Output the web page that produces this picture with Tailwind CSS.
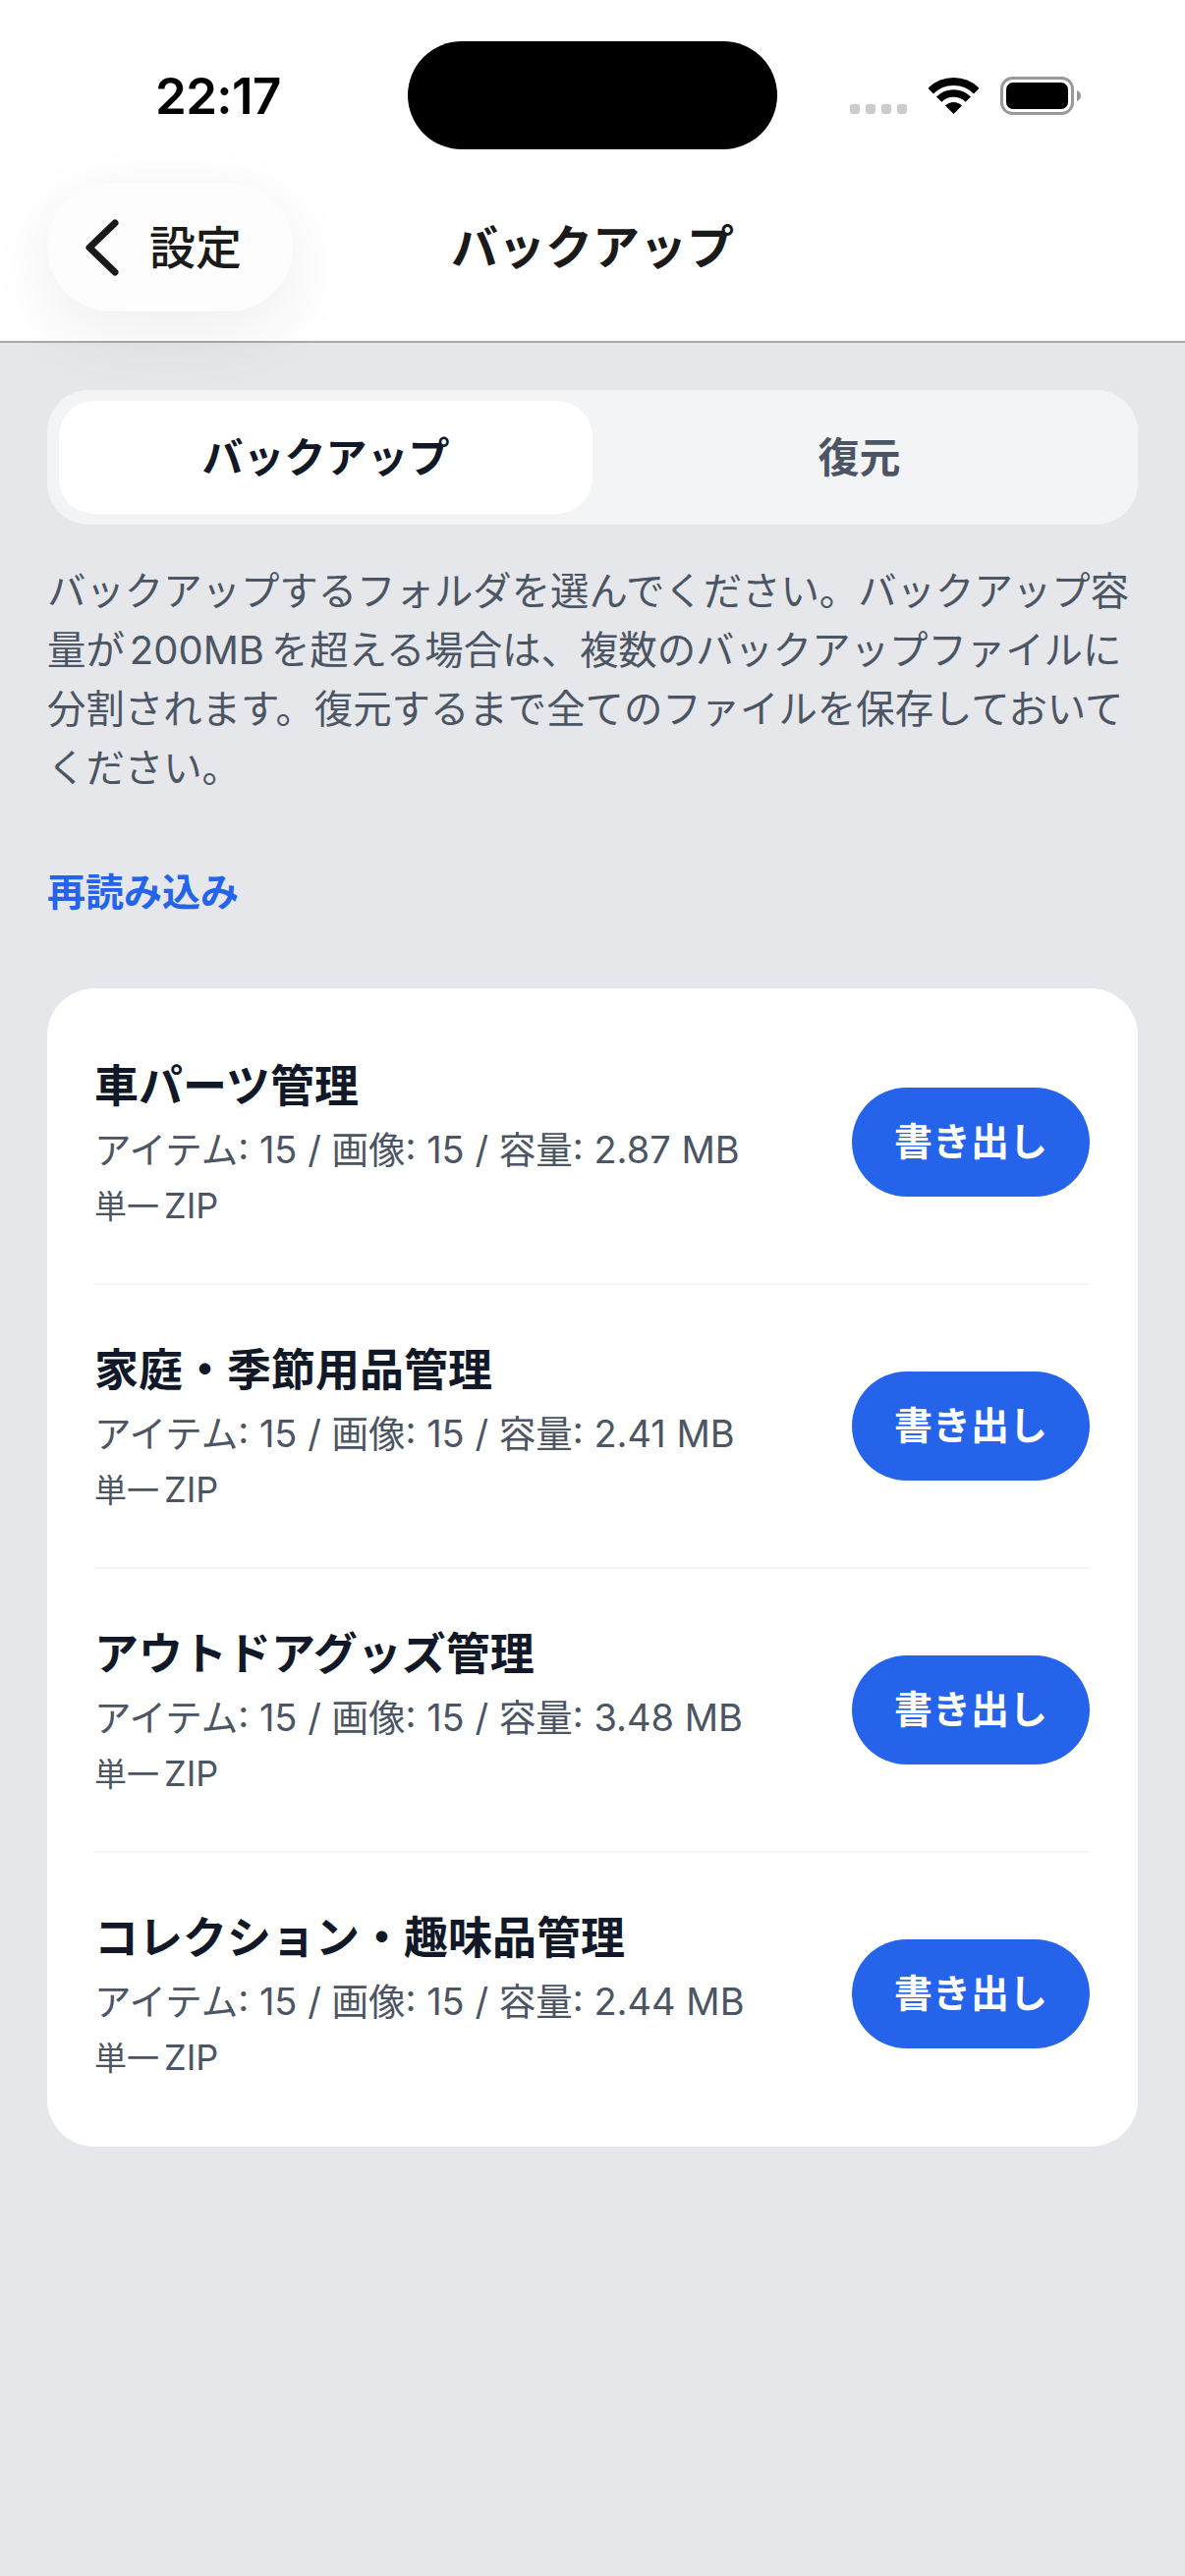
<!DOCTYPE html>
<html lang="ja">
<head>
<meta charset="utf-8">
<script src="https://cdn.jsdelivr.net/npm/@tailwindcss/browser@4"></script>
</head>
<body class="m-0 bg-[#e5e7eb]">
<div class="w-[1206px] h-[2622px] overflow-hidden bg-[#e5e7eb] font-['Inter','Noto_Sans_CJK_JP',sans-serif] text-[#111827]">
  <header class="relative z-10 h-[349px] bg-white border-b-2 border-[#a9a9a9] pt-[42px]">
    <div class="relative flex h-[110px] items-center justify-between">
      <span class="ml-[158px] text-[51px] leading-none font-semibold text-black tracking-[-0.6px]">22:17</span>
      <div class="absolute left-[415px] top-0 h-[110px] w-[376px] rounded-[55px] bg-black"></div>
      <div class="relative w-[340px] h-[110px]">
        <div class="absolute left-[-1px] top-[64px] flex gap-[6px]">
          <i class="block h-[10px] w-[10px] rounded-[3px] bg-[#cccccc]"></i>
          <i class="block h-[10px] w-[10px] rounded-[3px] bg-[#cccccc]"></i>
          <i class="block h-[10px] w-[10px] rounded-[3px] bg-[#cccccc]"></i>
          <i class="block h-[10px] w-[10px] rounded-[3px] bg-[#cccccc]"></i>
        </div>
        <svg class="absolute left-[79px] top-[37px]" width="51" height="37" viewBox="0 0 51 37" fill="none">
          <path d="M2.2 13.7A33 33 0 0 1 48.8 13.7" stroke="#000" stroke-width="8"/>
          <path d="M10.65 22.15A21 21 0 0 1 40.35 22.15" stroke="#000" stroke-width="7.5"/>
          <path d="M25.5 37L17 28.5A12 12 0 0 1 34 28.5Z" fill="#000"/>
        </svg>
        <svg class="absolute left-[152px] top-[36px]" width="84" height="39" viewBox="0 0 84 39" fill="none">
          <rect x="1.5" y="1.5" width="72" height="36" rx="11" stroke="#999" stroke-width="3"/>
          <rect x="6" y="6" width="63" height="27" rx="7" fill="#000"/>
          <path d="M78 14C81 15 82 17 82 19.5C82 22 81 24 78 25Z" fill="#999"/>
        </svg>
      </div>
    </div>
    <div class="grid grid-cols-[1fr_auto_1fr] items-center mt-[34px]">
      <div class="ml-[48px] flex h-[131px] w-[250px] items-center rounded-[66px] bg-[#fdfdfd] pl-[36px] shadow-[0_20px_70px_rgba(0,0,0,0.07)]">
        <svg width="38" height="61" viewBox="0 0 38 61" fill="none"><path d="M33 6L7 31L33 56" stroke="#1a1a1a" stroke-width="7" stroke-linecap="round" stroke-linejoin="round"/></svg>
        <span class="ml-[30px] text-[47px] leading-none font-medium text-[#1a1a1a]">設定</span>
      </div>
      <h1 class="text-[48px] leading-none font-semibold text-[#1a1a1a]">バックアップ</h1>
      <div></div>
    </div>
  </header>

  <main class="px-[48px] pt-[48px]">
    <div class="flex h-[137px] rounded-[42px] bg-[#f3f4f6] px-[12px] py-[11px]">
      <button class="flex-1 rounded-[36px] bg-white text-[42px] font-bold text-[#111827]">バックアップ</button>
      <button class="flex-1 text-[42px] font-semibold text-[#4b5563]">復元</button>
    </div>
    <p class="mt-[38px] text-[39.4px] leading-[60px] text-[#4b5563] whitespace-nowrap">バックアップするフォルダを選んでください。バックアップ容<br>量が<span class="ml-[5px] mr-[7px] text-[40px]">200MB</span>を超える場合は、複数のバックアップファイルに<br>分割されます。復元するまで全てのファイルを保存しておいて<br>ください。</p>
    <div class="mt-[66px] text-[39px] leading-[60px] font-semibold text-[#2563eb]">再読み込み</div>
    <section class="mt-[68px] rounded-[48px] bg-white pl-[48px] pr-[49px] pt-[13px] pb-[12px]">
      <div class="flex h-[289px] items-center justify-between border-b-2 border-[#f3f4f6]">
        <div>
          <div class="text-[45px] leading-[72px] font-bold text-[#111827]">車パーツ管理</div>
          <div class="text-[38px] leading-[56px] text-[#4b5563]"><span class="text-[37.5px]">アイテム</span>: 15 / <span class="text-[37.5px]">画像</span>: 15 / <span class="text-[37.5px]">容量</span>: 2.87 MB</div>
          <div class="text-[36px] leading-[56px] text-[#4b5563]"><span class="mr-[5px] text-[33px]">単一</span>ZIP</div>
        </div>
        <button class="h-[111px] w-[242px] rounded-[56px] bg-[#2563eb] text-[39px] font-semibold text-white">書き出し</button>
      </div>
      <div class="flex h-[289px] items-center justify-between border-b-2 border-[#f3f4f6]">
        <div>
          <div class="text-[45px] leading-[72px] font-bold text-[#111827]">家庭・季節用品管理</div>
          <div class="text-[38px] leading-[56px] text-[#4b5563]"><span class="text-[37.5px]">アイテム</span>: 15 / <span class="text-[37.5px]">画像</span>: 15 / <span class="text-[37.5px]">容量</span>: 2.41 MB</div>
          <div class="text-[36px] leading-[56px] text-[#4b5563]"><span class="mr-[5px] text-[33px]">単一</span>ZIP</div>
        </div>
        <button class="h-[111px] w-[242px] rounded-[56px] bg-[#2563eb] text-[39px] font-semibold text-white">書き出し</button>
      </div>
      <div class="flex h-[289px] items-center justify-between border-b-2 border-[#f3f4f6]">
        <div>
          <div class="text-[45px] leading-[72px] font-bold text-[#111827]">アウトドアグッズ管理</div>
          <div class="text-[38px] leading-[56px] text-[#4b5563]"><span class="text-[37.5px]">アイテム</span>: 15 / <span class="text-[37.5px]">画像</span>: 15 / <span class="text-[37.5px]">容量</span>: 3.48 MB</div>
          <div class="text-[36px] leading-[56px] text-[#4b5563]"><span class="mr-[5px] text-[33px]">単一</span>ZIP</div>
        </div>
        <button class="h-[111px] w-[242px] rounded-[56px] bg-[#2563eb] text-[39px] font-semibold text-white">書き出し</button>
      </div>
      <div class="flex h-[287px] items-center justify-between">
        <div>
          <div class="text-[45px] leading-[72px] font-bold text-[#111827]">コレクション・趣味品管理</div>
          <div class="text-[38px] leading-[56px] text-[#4b5563]"><span class="text-[37.5px]">アイテム</span>: 15 / <span class="text-[37.5px]">画像</span>: 15 / <span class="text-[37.5px]">容量</span>: 2.44 MB</div>
          <div class="text-[36px] leading-[56px] text-[#4b5563]"><span class="mr-[5px] text-[33px]">単一</span>ZIP</div>
        </div>
        <button class="h-[111px] w-[242px] rounded-[56px] bg-[#2563eb] text-[39px] font-semibold text-white">書き出し</button>
      </div>
    </section>
  </main>
</div>
</body>
</html>
